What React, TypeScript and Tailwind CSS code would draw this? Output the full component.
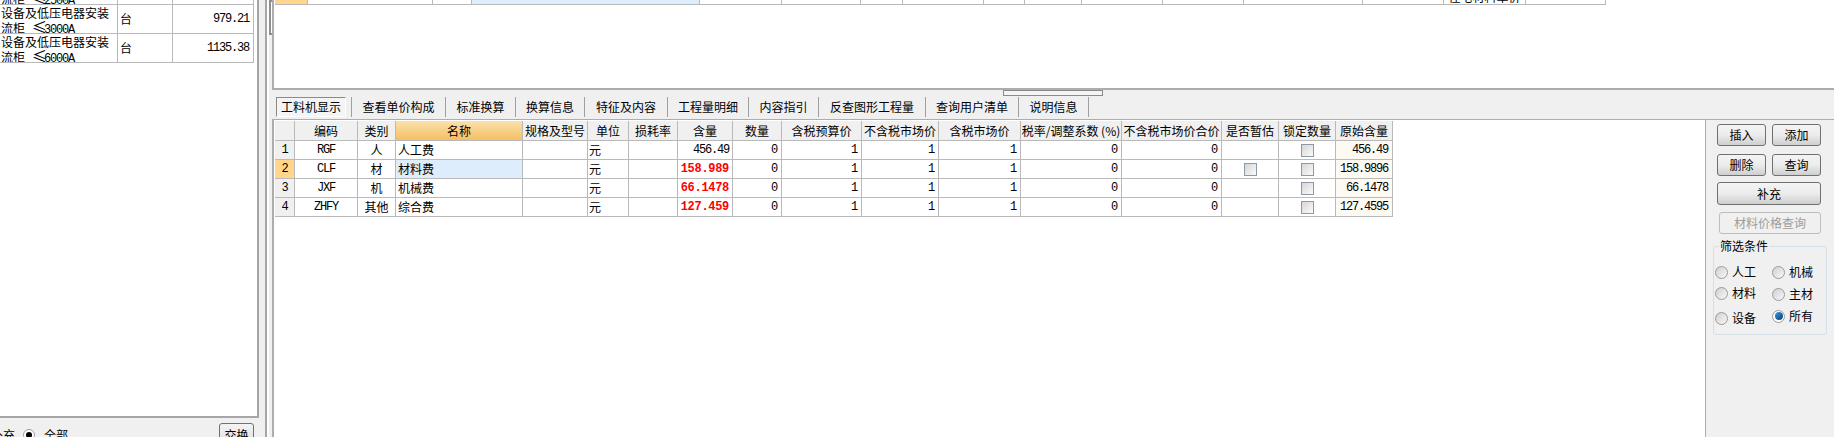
const cjk = "font-['Noto_Sans_CJK_SC','Noto_Sans',sans-serif]";
const mono = "font-['Liberation_Mono',monospace] text-[12px] tracking-[-1.2px]";
const redBold = "font-['Liberation_Mono',monospace] text-[12px] font-bold tracking-[-0.3px] text-[#ff0000]";
const line = "border-r border-b border-[#b9b9b9]";

const tabs = [
  { label: "查看单价构成", w: "w-[94px]" },
  { label: "标准换算", w: "w-[70px]" },
  { label: "换算信息", w: "w-[69px]" },
  { label: "特征及内容", w: "w-[83px]" },
  { label: "工程量明细", w: "w-[81px]" },
  { label: "内容指引", w: "w-[70px]" },
  { label: "反查图形工程量", w: "w-[107px]" },
  { label: "查询用户清单", w: "w-[93px]" },
  { label: "说明信息", w: "w-[70px]" },
];

const headers = ["", "编码", "类别", "名称", "规格及型号", "单位", "损耗率", "含量", "数量", "含税预算价", "不含税市场价", "含税市场价", "税率/调整系数 (%)", "不含税市场价合价", "是否暂估", "锁定数量", "原始含量"];

const rows = [
  { no: "1", code: "RGF", kind: "人", name: "人工费", qty: "456.49", red: false, est: false, orig: "456.49" },
  { no: "2", code: "CLF", kind: "材", name: "材料费", qty: "158.989", red: true, est: true, orig: "158.9896" },
  { no: "3", code: "JXF", kind: "机", name: "机械费", qty: "66.1478", red: true, est: false, orig: "66.1478" },
  { no: "4", code: "ZHFY", kind: "其他", name: "综合费", qty: "127.459", red: true, est: false, orig: "127.4595" },
];

const leftRows = [
  { spec: "2500A", price: "812.46" },
  { spec: "3000A", price: "979.21" },
  { spec: "6000A", price: "1135.38" },
];

function Check() {
  return <div className="w-[13px] h-[13px] border border-[#8d99a6] bg-gradient-to-br from-[#d6d6d6] to-[#fbfbfb]" />;
}

function Radio({ on, label }: { on?: boolean; label: string }) {
  return (
    <div className="flex items-center gap-[4px] h-[14px] text-[12px] leading-[14px]">
      <span className={`w-[13px] h-[13px] rounded-full border border-[#9a9a9a] flex items-center justify-center ${on ? "bg-white" : "bg-gradient-to-br from-[#d0d0d0] to-[#f8f8f8]"}`}>
        {on && <span className="w-[8px] h-[8px] rounded-full bg-gradient-to-br from-[#3f9bdc] to-[#0a3f7a]" />}
      </span>
      <span>{label}</span>
    </div>
  );
}

function Btn({ children, className }: { children: string; className: string }) {
  return (
    <button className={`flex items-center justify-center border border-[#707070] rounded-[3px] bg-gradient-to-b from-[#f4f4f4] via-[#ececec] to-[#cfcfcf] text-[12px] text-black ${className}`}>
      {children}
    </button>
  );
}

export default function App() {
  return (
    <div className={`w-[1834px] h-[437px] flex overflow-hidden bg-[#f0f0f0] text-black text-[12px] ${cjk}`}>
      {/* left list */}
      <div className="w-[259px] h-full flex flex-col shrink-0">
        <div className="h-[418px] shrink-0 bg-white border-r-2 border-b-2 border-[#a6a6a6] overflow-hidden">
          <div className="w-[254px] -mt-[24px]">
            {leftRows.map((r) => (
              <div key={r.spec} className="grid grid-cols-[118px_55px_81px] h-[29px]">
                <div className={`${line} pl-[1px] text-[12px] leading-[13px] pt-[1px] whitespace-nowrap overflow-hidden`}>
                  设备及低压电器安装
                  <br />
                  流柜
                  <span className="inline-block w-[12px] ml-[7px] text-[15px] leading-none">≤</span>
                  <span className={mono}>{r.spec}</span>
                </div>
                <div className={`${line} pl-[2px] flex items-center`}>台</div>
                <div className={`${line} pr-[4px] flex items-center justify-end ${mono}`}>{r.price}</div>
              </div>
            ))}
          </div>
        </div>
        <div className="flex-1 flex items-start pr-[5px] overflow-hidden">
          <div className="flex items-center pt-[8px] -ml-[9px] h-[26px] shrink-0">
            <span className="w-[32px]">补充</span>
            <span className="w-[12px] h-[12px] rounded-full border border-[#a0a0a0] bg-white flex items-center justify-center">
              <span className="w-[6px] h-[6px] rounded-full bg-black" />
            </span>
            <span className="ml-[9px]">全部</span>
          </div>
          <button className="ml-auto mt-[5px] w-[35px] h-[24px] shrink-0 border border-[#707070] rounded-[3px] bg-gradient-to-b from-[#f4f4f4] to-[#dcdcdc] text-[12px]">交换</button>
        </div>
      </div>

      {/* splitter */}
      <div className="w-[13px] h-full shrink-0 flex">
        <div className="w-[6px]" />
        <div className="w-[2px] bg-[#a6a6a6]" />
        <div className="w-[2px] bg-white" />
        <div className="w-[3px] flex flex-col">
          <div className="h-[35px] border-2 border-r-0 border-[#8f8f8f] bg-white" />
        </div>
      </div>

      {/* main */}
      <div className="flex-1 h-full flex flex-col min-w-0">
        <div className="h-[90px] shrink-0 bg-white border-l-2 border-b-2 border-[#adadad] overflow-hidden">
          <div className="ml-[1px] -mt-[14px] grid grid-cols-[33px_125px_39px_228px_82px_79px_42px_81px_41px_57px_81px_81px_119px_81px_82px_80px] w-[1331px] h-[19px]">
            <div className={`${line} bg-[#ffd68c]`} />
            <div className={line} />
            <div className={line} />
            <div className={`${line} bg-[#deedfb]`} />
            <div className={line} />
            <div className={line} />
            <div className={line} />
            <div className={line} />
            <div className={line} />
            <div className={line} />
            <div className={line} />
            <div className={line} />
            <div className={line} />
            <div className={line} />
            <div className={`${line} pt-[4px] text-center leading-[14px] whitespace-nowrap overflow-hidden`}>住宅材料单价</div>
            <div className={line} />
          </div>
        </div>

        <div className="relative h-[30px] shrink-0 flex items-start pt-[7px] pl-[4px] border-b border-[#adadad]">
          <div className="w-[70px] h-[20px] flex items-center justify-center border border-t-[#8a8a8a] border-l-[#8a8a8a] border-r-white border-b-white bg-[#f4f4f4]">工料机显示</div>
          <div className="w-[6px] h-[20px] border-r border-[#a0a0a0]" />
          {tabs.map((t) => (
            <div key={t.label} className={`${t.w} h-[20px] flex items-center justify-center border-r border-[#a0a0a0] whitespace-nowrap`}>{t.label}</div>
          ))}
          <div className="absolute left-[731px] top-0 w-[100px] h-[6px] border border-[#8a8a8a] bg-[#f4f4f4]" />
        </div>

        <div className="flex-1 flex min-h-0">
          <div className="w-[1434px] shrink-0 bg-white border-l-2 border-r border-[#adadad] pt-[1px] pl-[1px]">
            <div className="grid grid-cols-[20px_63px_38px_127px_65px_41px_49px_55px_49px_80px_77px_82px_101px_100px_57px_57px_57px] w-[1118px] auto-rows-[19px] [grid-template-rows:20px]">
              {headers.map((h) => (
                <div key={h} className={`${line} flex items-center justify-center whitespace-nowrap overflow-hidden ${h === "名称" ? "bg-gradient-to-b from-[#fbe1ac] to-[#f4bf60]" : "bg-[#f0f0f0]"}`}>{h}</div>
              ))}
              {rows.map((r) => (
                <div key={r.no} className="contents">
                  <div className={`${line} flex items-center justify-center ${mono} ${r.no === "2" ? "bg-[#ffd68c]" : "bg-[#f0f0f0]"}`}>{r.no}</div>
                  <div className={`${line} flex items-center justify-center ${mono}`}>{r.code}</div>
                  <div className={`${line} flex items-center justify-center`}>{r.kind}</div>
                  <div className={`${line} flex items-center pl-[2px] ${r.no === "2" ? "bg-[#deedfb]" : ""}`}>{r.name}</div>
                  <div className={line} />
                  <div className={`${line} flex items-center pl-[1px]`}>元</div>
                  <div className={line} />
                  <div className={`${line} flex items-center justify-end pr-[3px] ${r.red ? redBold : mono}`}>{r.qty}</div>
                  <div className={`${line} flex items-center justify-end pr-[4px] ${mono}`}>0</div>
                  <div className={`${line} flex items-center justify-end pr-[4px] ${mono}`}>1</div>
                  <div className={`${line} flex items-center justify-end pr-[4px] ${mono}`}>1</div>
                  <div className={`${line} flex items-center justify-end pr-[4px] ${mono}`}>1</div>
                  <div className={`${line} flex items-center justify-end pr-[4px] ${mono}`}>0</div>
                  <div className={`${line} flex items-center justify-end pr-[4px] ${mono}`}>0</div>
                  <div className={`${line} flex items-center justify-center`}>{r.est && <Check />}</div>
                  <div className={`${line} flex items-center justify-center`}><Check /></div>
                  <div className={`${line} flex items-center justify-end pr-[4px] bg-[#fdf9f3] ${mono}`}>{r.orig}</div>
                </div>
              ))}
            </div>
          </div>

          <div className="flex-1 pl-[11px] pt-[4px] flex flex-col">
            <div className="flex gap-[6px]">
              <Btn className="w-[49px] h-[22px]">插入</Btn>
              <Btn className="w-[49px] h-[22px]">添加</Btn>
            </div>
            <div className="flex gap-[6px] mt-[8px]">
              <Btn className="w-[49px] h-[22px]">删除</Btn>
              <Btn className="w-[49px] h-[22px]">查询</Btn>
            </div>
            <Btn className="w-[104px] h-[23px] mt-[6px]">补充</Btn>
            <button className="w-[102px] h-[22px] mt-[7px] ml-[2px] border border-[#bdbdbd] rounded-[3px] bg-[#f0f0f0] text-[#9c9c9c] text-[12px]">材料价格查询</button>
            <div className="relative w-[114px] h-[89px] mt-[12px] -ml-[4px] border border-[#d5dfe5] rounded-[3px] pl-[1px] pt-[18px] flex">
              <span className="absolute left-[5px] -top-[8px] px-[1px] bg-[#f0f0f0] leading-[14px]">筛选条件</span>
              <div className="w-[57px] flex flex-col">
                <Radio label="人工" />
                <div className="mt-[7px]"><Radio label="材料" /></div>
                <div className="mt-[11px]"><Radio label="设备" /></div>
              </div>
              <div className="flex flex-col">
                <Radio label="机械" />
                <div className="mt-[8px]"><Radio label="主材" /></div>
                <div className="mt-[8px]"><Radio on label="所有" /></div>
              </div>
            </div>
          </div>
        </div>
      </div>
    </div>
  );
}
